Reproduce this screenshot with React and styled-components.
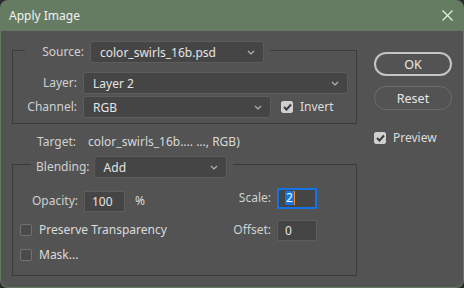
import styled, { createGlobalStyle } from 'styled-components';

const GlobalStyle = createGlobalStyle`
  html, body {
    margin: 0;
    padding: 0;
    background: #2b2b2b;
  }
  body {
    font-family: "Noto Sans", "DejaVu Sans", sans-serif;
    font-size: 12px;
    color: #d4d4d4;
  }
`;

const Window = styled.div`
  width: 464px;
  height: 288px;
  box-sizing: border-box;
  display: flex;
  flex-direction: column;
  background: #657c62;
  border-radius: 8px;
  padding: 0 1px 1px;
  overflow: hidden;
`;

const TitleBar = styled.div`
  height: 31px;
  flex: none;
  display: flex;
  align-items: center;
  justify-content: space-between;
  padding: 0 9px 0 8px;
  color: #f2f2f2;
  font-size: 12px;
`;

const CloseButton = styled.svg`
  width: 11px;
  height: 11px;
  margin-right: 1px;
`;

const Body = styled.div`
  flex: 1;
  display: flex;
  gap: 17px;
  padding: 10px 11px 0 11px;
  background: #535353;
  border-radius: 0 0 7px 7px;
`;

const LeftColumn = styled.div`
  width: 346px;
  display: flex;
  flex-direction: column;
`;

const Group = styled.fieldset`
  margin: 0;
  border: 1px solid #3c3c3c;
  padding: ${({ $pad }) => $pad};
  min-width: 0;
`;

const Legend = styled.legend`
  height: ${({ $h }) => $h}px;
  display: flex;
  align-items: flex-start;
  gap: ${({ $gap }) => $gap ?? 6}px;
  padding: 0 6px 0 5px;
  margin-left: ${({ $ml }) => $ml}px;
`;

const Row = styled.div`
  display: flex;
  align-items: center;
  gap: ${({ $gap }) => $gap ?? 6}px;
  margin-top: ${({ $mt }) => $mt ?? 0}px;
`;

const Label = styled.span`
  width: ${({ $w }) => ($w ? `${$w}px` : 'auto')};
  text-align: right;
  flex: none;
  line-height: ${({ $lh }) => $lh ?? 22}px;
  color: #d0d0d0;
`;

const Select = styled.div`
  width: ${({ $w }) => $w}px;
  height: 22px;
  box-sizing: border-box;
  display: flex;
  align-items: center;
  justify-content: space-between;
  padding: 0 8px 0 9px;
  background: #454545;
  border: 1px solid #5c5c5c;
  border-radius: 3px;
  color: #e4e4e4;
  flex: none;
`;

const Chevron = () => (
  <svg width="8" height="5" viewBox="0 0 8 5">
    <path d="M1 1 L4 4 L7 1" fill="none" stroke="#b4b4b4" strokeWidth="1.2" />
  </svg>
);

const Box = styled.span`
  width: 12px;
  height: 12px;
  box-sizing: border-box;
  border-radius: 2px;
  flex: none;
  display: flex;
  align-items: center;
  justify-content: center;
  background: ${({ $on }) => ($on ? '#cfcfcf' : '#4a4a4a')};
  border: 1px solid ${({ $on }) => ($on ? '#cfcfcf' : '#727272')};
`;

const CheckLabel = styled.span`
  color: #dcdcdc;
  line-height: 16px;
`;

const Check = ({ on, children }) => (
  <>
    <Box $on={on}>
      {on && (
        <svg width="9" height="8" viewBox="0 0 9 8">
          <path d="M1 4 L3.5 6.5 L8 1.5" fill="none" stroke="#3a3a3a" strokeWidth="1.9" />
        </svg>
      )}
    </Box>
    <CheckLabel>{children}</CheckLabel>
  </>
);

const TargetRow = styled.div`
  display: flex;
  gap: 12px;
  margin: 10px 0 0 25px;
  line-height: 16px;
`;

const TargetValue = styled.span`
  color: #d8d8d8;
`;

const BlendGrid = styled.div`
  display: flex;
  justify-content: space-between;
`;

const Col = styled.div`
  display: flex;
  flex-direction: column;
  align-items: ${({ $end }) => ($end ? 'flex-end' : 'stretch')};
  padding-top: ${({ $pt }) => $pt}px;
  gap: ${({ $gap }) => $gap}px;
`;

const Field = styled.div`
  width: ${({ $w }) => $w}px;
  height: 21px;
  box-sizing: border-box;
  display: flex;
  align-items: center;
  background: #454545;
  border: ${({ $focus }) => ($focus ? '2px solid #1473e6' : '1px solid #5c5c5c')};
  padding-left: ${({ $focus }) => ($focus ? 6 : 7)}px;
  color: #e4e4e4;
`;

const Selected = styled.span`
  background: #1473e6;
  color: #ffffff;
  line-height: 14px;
  padding: 0 1px;
  border-right: 1px solid #f28a1e;
`;

const RightColumn = styled.div`
  display: flex;
  flex-direction: column;
  padding-top: 11px;
`;

const Button = styled.div`
  width: 78px;
  height: 24px;
  box-sizing: border-box;
  display: flex;
  align-items: center;
  justify-content: center;
  border-radius: 12px;
  border: ${({ $primary }) => ($primary ? '2px solid #c4c4c4' : '1.5px solid #6c6c6c')};
  color: #e8e8e8;
  font-size: 12.5px;
  margin-bottom: 10px;
`;

const PreviewRow = styled.div`
  display: flex;
  align-items: center;
  gap: 7px;
  margin-top: 10px;
`;

export default function App() {
  return (
    <>
      <GlobalStyle />
      <Window>
        <TitleBar>
          <span>Apply Image</span>
          <CloseButton viewBox="0 0 11 11">
            <path d="M0.5 0.5 L10.5 10.5 M10.5 0.5 L0.5 10.5" stroke="#f0f0f0" strokeWidth="1.1" />
          </CloseButton>
        </TitleBar>
        <Body>
          <LeftColumn>
            <Group $pad="13px 8px 5px 0">
              <Legend $h={18} $ml={12}>
                <Label $w={54}>Source:</Label>
                <Select $w={174}>
                  color_swirls_16b.psd
                  <Chevron />
                </Select>
              </Legend>
              <Row>
                <Label $w={64}>Layer:</Label>
                <Select $w={265}>
                  Layer 2
                  <Chevron />
                </Select>
              </Row>
              <Row $mt={2}>
                <Label $w={64}>Channel:</Label>
                <Select $w={188}>
                  RGB
                  <Chevron />
                </Select>
                <Row $gap={7} style={{ marginLeft: 4 }}>
                  <Check on>Invert</Check>
                </Row>
              </Row>
            </Group>
            <TargetRow>
              <Label $lh={16}>Target:</Label>
              <TargetValue>color_swirls_16b.... ..., RGB)</TargetValue>
            </TargetRow>
            <Group $pad="0 39px 12px 7px" style={{ marginTop: 6 }}>
              <Legend $h={16} $ml={11} $gap={4}>
                <Label>Blending:</Label>
                <Select $w={133}>
                  Add
                  <Chevron />
                </Select>
              </Legend>
              <BlendGrid>
                <Col $pt={18} $gap={0}>
                  <Row>
                    <Label $w={58}>Opacity:</Label>
                    <Field $w={41}>100</Field>
                    <CheckLabel style={{ marginLeft: 4 }}>%</CheckLabel>
                  </Row>
                  <Row $gap={7} $mt={10}>
                    <Check>Preserve Transparency</Check>
                  </Row>
                  <Row $gap={7} $mt={9}>
                    <Check>Mask...</Check>
                  </Row>
                </Col>
                <Col $pt={15} $gap={10} $end>
                  <Row>
                    <Label>Scale:</Label>
                    <Field $w={40} $focus>
                      <Selected>2</Selected>
                    </Field>
                  </Row>
                  <Row>
                    <Label>Offset:</Label>
                    <Field $w={40}>0</Field>
                  </Row>
                </Col>
              </BlendGrid>
            </Group>
          </LeftColumn>
          <RightColumn>
            <Button $primary>OK</Button>
            <Button>Reset</Button>
            <PreviewRow>
              <Check on>Preview</Check>
            </PreviewRow>
          </RightColumn>
        </Body>
      </Window>
    </>
  );
}
